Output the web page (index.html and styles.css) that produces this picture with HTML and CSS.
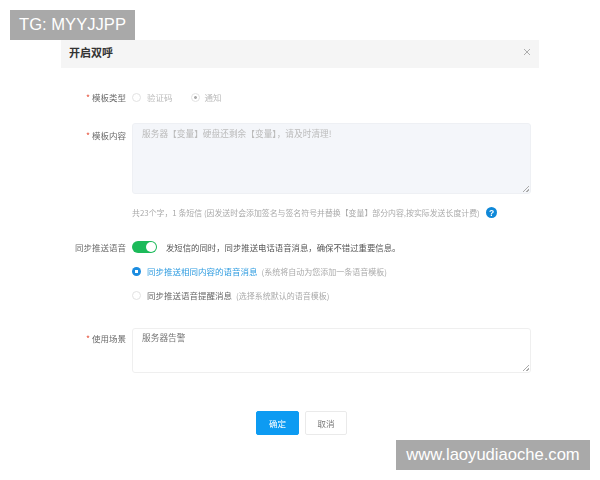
FILE: index.html
```html
<!DOCTYPE html>
<html lang="zh">
<head>
<meta charset="utf-8">
<title>开启双呼</title>
<link rel="stylesheet" href="styles.css">
</head>
<body>
<div class="wm wm-top">TG: MYYJJPP</div>
<div class="wm wm-bottom">www.laoyudiaoche.com</div>
<main class="dialog">
  <header class="head">
    <h1 class="title">开启双呼</h1>
    <svg class="close" width="8" height="8" viewBox="0 0 8 8"><path d="M1 1l6 6M7 1L1 7" stroke="#9a9a9a" stroke-width=".8" fill="none"/></svg>
  </header>
  <form class="form">
    <div class="row row-type">
      <div class="label"><span class="req">*</span> 模板类型</div>
      <div class="radios">
        <span class="opt muted"><i class="radio"></i>验证码</span>
        <span class="opt muted"><i class="radio dot-off"></i>通知</span>
      </div>
    </div>
    <div class="row row-content">
      <div class="label label-top"><span class="req">*</span> 模板内容</div>
      <textarea class="area area-off" disabled>服务器【变量】硬盘还剩余【变量】，请及时清理!</textarea>
    </div>
    <div class="hint">
      <span>共23个字，1 条短信 (因发送时会添加签名与签名符号并替换【变量】部分内容,按实际发送长度计费)</span>
      <svg class="help" width="11" height="11" viewBox="0 0 11 11"><circle cx="5.5" cy="5.5" r="5.5" fill="#0f88d8"/><text x="5.5" y="8.6" text-anchor="middle" class="help-q">?</text></svg>
    </div>
    <div class="row row-switch">
      <div class="label">同步推送语音</div>
      <span class="switch"><i class="knob"></i></span>
      <span class="switch-text">发短信的同时，同步推送电话语音消息，确保不错过重要信息。</span>
    </div>
    <div class="line line-a">
      <i class="radio radio-on"></i><span class="blue">同步推送相同内容的语音消息</span><span class="note">(系统将自动为您添加一条语音模板)</span>
    </div>
    <div class="line line-b">
      <i class="radio"></i><span class="plain">同步推送语音提醒消息</span><span class="note">(选择系统默认的语音模板)</span>
    </div>
    <div class="row row-scene">
      <div class="label label-top"><span class="req">*</span> 使用场景</div>
      <textarea class="area area-scene">服务器告警</textarea>
    </div>
    <div class="actions">
      <button type="button" class="btn btn-primary">确定</button>
      <button type="button" class="btn">取消</button>
    </div>
  </form>
</main>
</body>
</html>
```
FILE: styles.css
```css
html, body { margin: 0; padding: 0; background: #fff; }
body {
  width: 600px;
  height: 480px;
  overflow: hidden;
  position: relative;
  font-family: "Noto Sans CJK SC", "Liberation Sans", sans-serif;
  font-size: 8.5px;
  color: #666;
}
.wm {
  position: absolute;
  background: #a9a9a9;
  color: #fff;
  height: 30px;
  line-height: 30px;
  font-family: "Liberation Sans", sans-serif;
  font-size: 16.6px;
  text-align: center;
  z-index: 2;
}
.wm-top { left: 10px; top: 10px; width: 125px; }
.wm-bottom { left: 396px; top: 440px; width: 194px; }
.dialog { width: 478px; margin: 40px 0 0 61px; filter: blur(.45px); }
.head {
  box-sizing: border-box;
  height: 28px;
  background: #f5f5f5;
  display: flex;
  align-items: center;
  justify-content: space-between;
  padding: 0 8px 4px;
}
.title { margin: 0; font-size: 11px; font-weight: 700; color: #333; }
.close { display: block; }
.form { display: flex; flex-direction: column; }
.row { display: flex; align-items: center; }
.label { width: 65px; margin-right: 6px; flex: none; text-align: right; color: #6a6a6a; white-space: nowrap; }
.label-top { align-self: flex-start; }
.req { color: #e8553f; }
.row-type { margin-top: 22px; height: 14px; }
.radios { display: flex; gap: 18px; }
.opt { display: flex; align-items: center; }
.muted { color: #bbb; }
.radio {
  display: inline-block;
  box-sizing: border-box;
  width: 9px;
  height: 9px;
  border: 1px solid #e2e2e2;
  border-radius: 50%;
  margin-right: 6px;
  flex: none;
  background: #fff;
}
.dot-off { background: radial-gradient(circle, #aaa 0 1.2px, #fff 1.6px); margin-right: 5px; }
.radio-on { border: 0; background: radial-gradient(circle, #fff 0 1.6px, #1b8ce0 2px); }
.row-content { margin-top: 19px; align-items: flex-start; }
.row-content .label-top { padding-top: 6px; }
.area {
  display: block;
  box-sizing: border-box;
  width: 399px;
  border: 1px solid #efefef;
  border-radius: 3px;
  padding: 3px 9px;
  margin: 0;
  font: inherit;
  font-size: 8.7px;
  line-height: 14px;
  color: #777;
  outline: 0;
}
.area::-webkit-resizer {
  background: linear-gradient(135deg, transparent 55%, #aaa 55% 64%, transparent 64% 78%, #aaa 78% 87%, transparent 87%) no-repeat right 1px bottom 1px / 7px 7px;
}
.area-off { height: 71px; background: #f4f6fa; color: #bbb; border-color: #eef0f4; }
.area-scene { height: 45px; background: #fff; padding-top: 2px; }
.hint { margin: 12px 0 0 71px; display: flex; align-items: center; height: 13px; font-size: 7.9px; color: #aaa; white-space: nowrap; }
.help { margin-left: 6px; display: block; flex: none; }
.help-q { font: 700 8.5px "Liberation Sans", sans-serif; fill: #fff; }
.row-switch { margin-top: 21px; height: 14px; }
.switch {
  width: 25px;
  height: 12px;
  border-radius: 6px;
  background: #1cba5a;
  display: flex;
  justify-content: flex-end;
  align-items: center;
  padding-right: 1px;
  box-sizing: border-box;
  margin-right: 9px;
  flex: none;
}
.knob { width: 10px; height: 10px; border-radius: 50%; background: #fff; display: block; }
.switch-text { color: #555; white-space: nowrap; font-size: 8.4px; }
.line { margin-left: 71px; display: flex; align-items: center; height: 14px; white-space: nowrap; }
.line-a { margin-top: 10px; }
.line-b { margin-top: 10px; }
.line .radio { margin-right: 6px; }
.blue { color: #2f9ce0; font-size: 8.5px; }
.plain { color: #666; font-size: 8.5px; }
.note { color: #aaa; margin-left: 4px; font-size: 8px; }
.row-scene { margin-top: 26px; align-items: flex-start; }
.row-scene .label-top { padding-top: 4px; }
.actions { display: flex; gap: 6px; margin: 38px 0 0 195px; }
.btn {
  box-sizing: border-box;
  width: 42px;
  height: 24px;
  padding: 0;
  border: 1px solid #eaeaea;
  border-radius: 2px;
  background: #fff;
  color: #777;
  font: inherit;
}
.btn-primary { width: 43px; background: #0d9bf2; border-color: #0d9bf2; color: #fff; }
```
